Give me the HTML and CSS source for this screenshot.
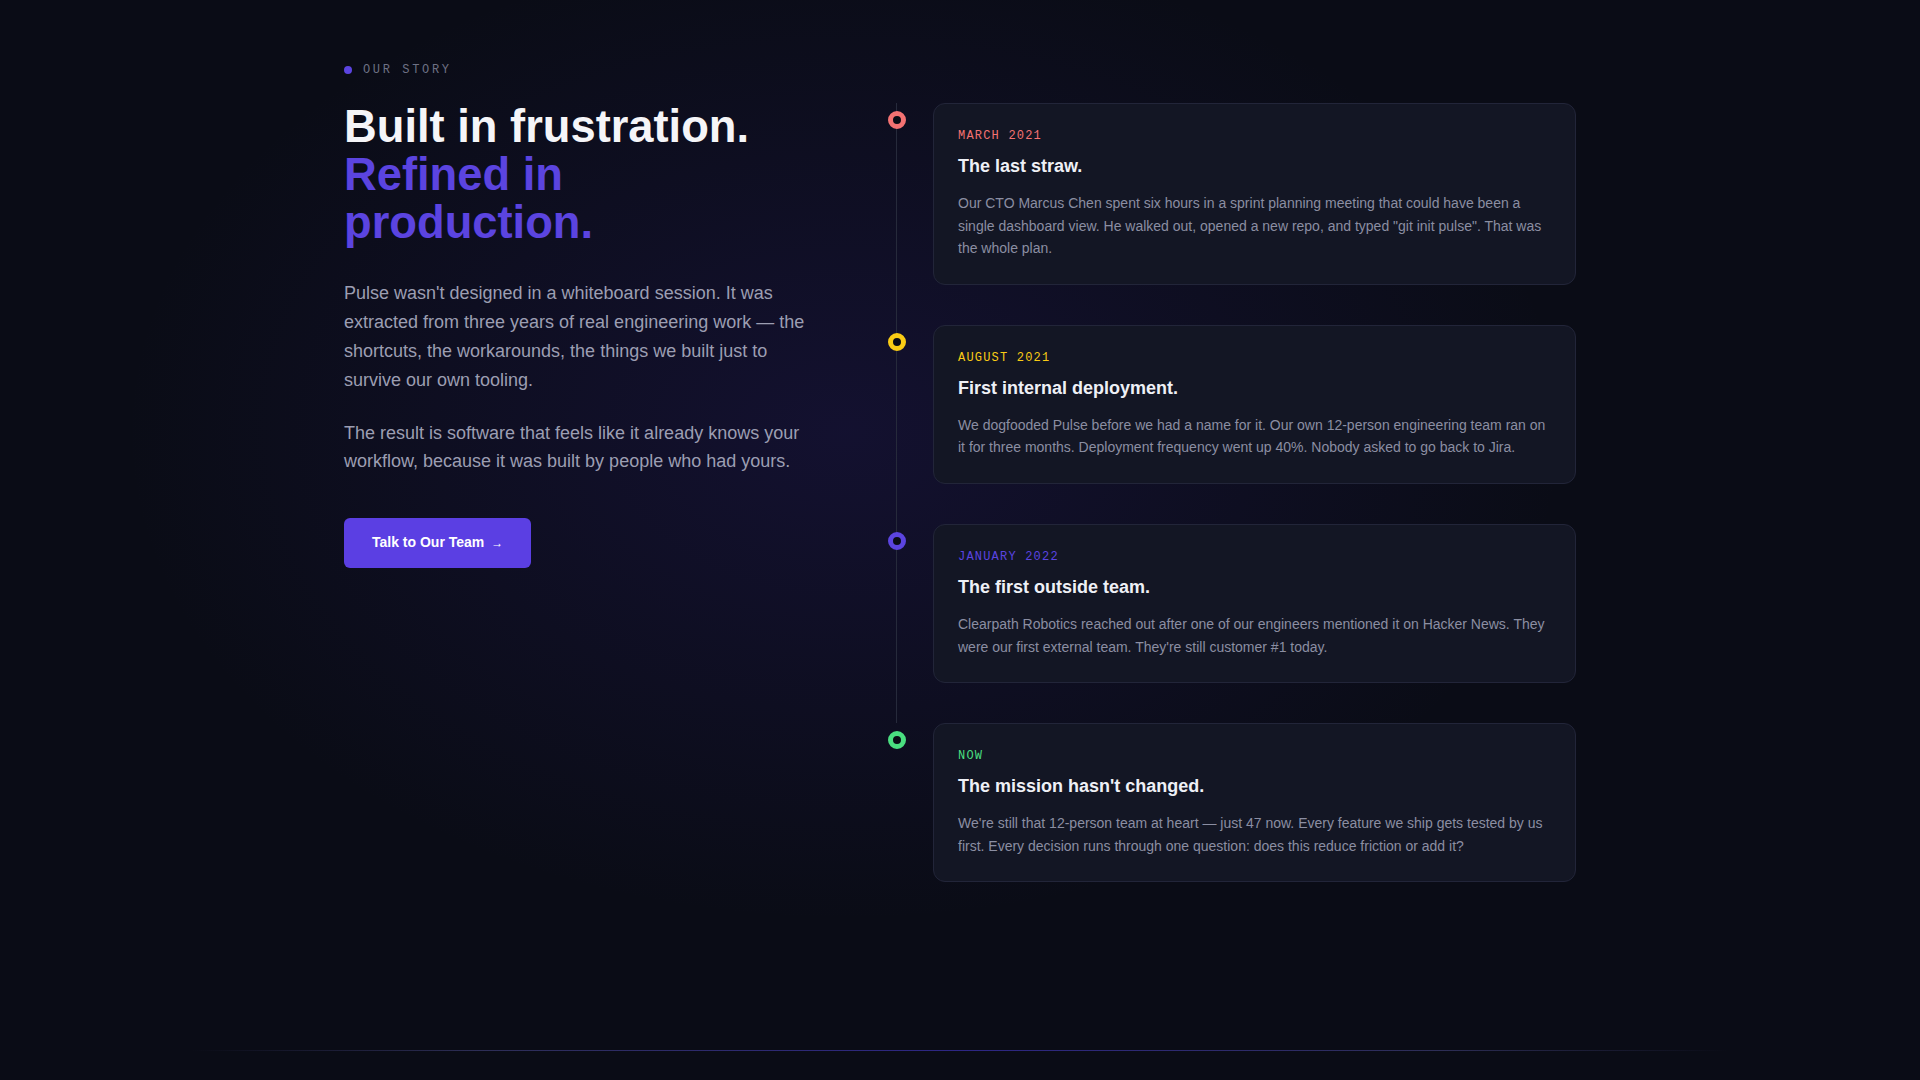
FILE: index.html
```html
<!DOCTYPE html>
<html lang="en">
<head>
    <meta charset="UTF-8">
    <meta name="viewport" content="width=device-width, initial-scale=1.0">
    <title>Our Story - Pulse</title>
    <link rel="stylesheet" href="styles.css">
</head>
<body>
    <section class="story">
        <div class="container">
            <p class="eyebrow"><span class="eyebrow-dot"></span>OUR STORY</p>

            <div class="story-grid">
                <div class="story-intro">
                    <h2>Built in frustration.<br><span class="accent">Refined in production.</span></h2>
                    <p>Pulse wasn't designed in a whiteboard session. It was extracted from three years of real engineering work — the shortcuts, the workarounds, the things we built just to survive our own tooling.</p>
                    <p>The result is software that feels like it already knows your workflow, because it was built by people who had yours.</p>
                    <div class="story-actions">
                        <a href="#" class="btn-primary">Talk to Our Team <span class="arrow">→</span></a>
                    </div>
                </div>

                <ol class="timeline">
                    <li class="milestone milestone-red">
                        <span class="milestone-dot"></span>
                        <div class="milestone-card">
                            <p class="milestone-date">MARCH 2021</p>
                            <h3>The last straw.</h3>
                            <p class="milestone-text">Our CTO Marcus Chen spent six hours in a sprint planning meeting that could have been a single dashboard view. He walked out, opened a new repo, and typed "git init pulse". That was the whole plan.</p>
                        </div>
                    </li>
                    <li class="milestone milestone-yellow">
                        <span class="milestone-dot"></span>
                        <div class="milestone-card">
                            <p class="milestone-date">AUGUST 2021</p>
                            <h3>First internal deployment.</h3>
                            <p class="milestone-text">We dogfooded Pulse before we had a name for it. Our own 12-person engineering team ran on it for three months. Deployment frequency went up 40%. Nobody asked to go back to Jira.</p>
                        </div>
                    </li>
                    <li class="milestone milestone-purple">
                        <span class="milestone-dot"></span>
                        <div class="milestone-card">
                            <p class="milestone-date">JANUARY 2022</p>
                            <h3>The first outside team.</h3>
                            <p class="milestone-text">Clearpath Robotics reached out after one of our engineers mentioned it on Hacker News. They were our first external team. They're still customer #1 today.</p>
                        </div>
                    </li>
                    <li class="milestone milestone-green">
                        <span class="milestone-dot"></span>
                        <div class="milestone-card">
                            <p class="milestone-date">NOW</p>
                            <h3>The mission hasn't changed.</h3>
                            <p class="milestone-text">We're still that 12-person team at heart — just 47 now. Every feature we ship gets tested by us first. Every decision runs through one question: does this reduce friction or add it?</p>
                        </div>
                    </li>
                </ol>
            </div>
        </div>
    </section>

    <div class="divider"></div>
</body>
</html>
```

FILE: styles.css
```css
body {
    margin: 0;
    padding: 0;
    min-height: 100vh;
    font-family: "Liberation Sans", Arial, sans-serif;
    color: #eef0f6;
    background-color: #0a0c16;
    background-image: radial-gradient(ellipse 1000px 680px at 44% 40%, rgba(56, 36, 150, 0.2), rgba(56, 36, 150, 0) 72%);
    background-repeat: no-repeat;
}
.container {
    max-width: 1280px;
    margin: 0 auto;
    padding: 0 24px;
    box-sizing: border-box;
}
.story {
    padding: 63px 0 168px;
}

/* eyebrow */
.eyebrow {
    display: flex;
    align-items: center;
    gap: 11px;
    margin: 0 0 26px;
    font-family: "Liberation Mono", monospace;
    font-size: 12px;
    letter-spacing: 0.22em;
    color: #6e7184;
}
.eyebrow-dot {
    width: 8px;
    height: 8px;
    border-radius: 50%;
    background-color: #5b44e0;
}

.story-grid {
    display: grid;
    grid-template-columns: 466px 1fr;
    column-gap: 78px;
    align-items: start;
}

/* left column */
.story-intro h2 {
    margin: 0 0 33px;
    font-size: 45.3px;
    line-height: 1.055;
    font-weight: 700;
    color: #f5f5f8;
}
.story-intro h2 .accent {
    color: #5b44e0;
}
.story-intro p {
    margin: 0 0 24px;
    font-size: 18px;
    line-height: 1.6;
    color: #9c9eb2;
}
.story-intro p:last-of-type {
    margin-bottom: 0;
}
.story-actions {
    margin-top: 42px;
}
.btn-primary {
    display: inline-block;
    padding: 16px 28px;
    font-size: 14px;
    line-height: 17px;
    font-weight: 700;
    color: #fff;
    text-decoration: none;
    background-color: #5b3fe3;
    border-radius: 6px;
}
.btn-primary .arrow {
    margin-left: 3px;
    font-size: 12px;
}

/* timeline */
.timeline {
    list-style: none;
    margin: 0;
    padding: 0;
    display: flex;
    flex-direction: column;
    gap: 40px;
}
.milestone {
    position: relative;
    display: flex;
    align-items: flex-start;
    gap: 27px;
}
.milestone:not(:last-child)::after {
    content: "";
    position: absolute;
    left: 8px;
    top: 0;
    bottom: -40px;
    width: 1px;
    background-color: #262a3b;
}
.milestone-dot {
    position: relative;
    z-index: 1;
    flex: 0 0 auto;
    width: 8px;
    height: 8px;
    margin-top: 8px;
    border: 5px solid;
    border-radius: 50%;
    background-color: #0a0c16;
}
.milestone-card {
    flex: 1;
    padding: 25px 24px 24px;
    background-color: #131624;
    border: 1px solid #222539;
    border-radius: 12px;
}
.milestone-date {
    margin: 0 0 12px;
    font-family: "Liberation Mono", monospace;
    font-size: 12px;
    letter-spacing: 0.1em;
}
.milestone-card h3 {
    margin: 0 0 14px;
    font-size: 18px;
    line-height: 1.3;
    font-weight: 700;
    color: #eef0f6;
}
.milestone-text {
    margin: 0;
    font-size: 14px;
    line-height: 1.6;
    color: #8b8ea2;
}

.milestone-red .milestone-dot { border-color: #f47272; }
.milestone-red .milestone-date { color: #f47272; }
.milestone-yellow .milestone-dot { border-color: #facc15; }
.milestone-yellow .milestone-date { color: #facc15; }
.milestone-purple .milestone-dot { border-color: #5b44e0; }
.milestone-purple .milestone-date { color: #5b44e0; }
.milestone-green .milestone-dot { border-color: #4ade80; }
.milestone-green .milestone-date { color: #4ade80; }

.divider {
    height: 1px;
    background: linear-gradient(90deg, rgba(60, 60, 120, 0) 10%, rgba(80, 80, 150, 0.5) 25%, rgba(60, 50, 180, 0.7) 50%, rgba(80, 80, 150, 0.5) 75%, rgba(60, 60, 120, 0) 90%);
}
```
